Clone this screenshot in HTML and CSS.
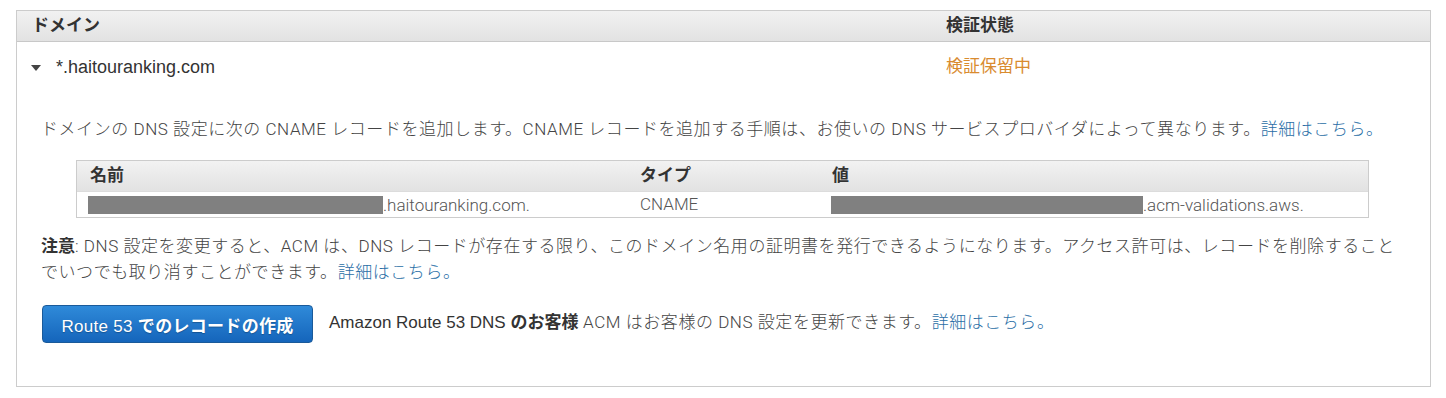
FILE: index.html
```html
<!DOCTYPE html>
<html lang="ja">
<head>
<meta charset="utf-8">
<link rel="stylesheet" href="styles.css">
</head>
<body>
<div class="panel">
  <div class="head">
    <div class="cell">ドメイン</div>
    <div class="cell">検証状態</div>
  </div>
  <div class="row">
    <div class="cell domain"><span class="caret"></span>*.haitouranking.com</div>
    <div class="cell status">検証保留中</div>
  </div>
  <div class="detail">
    <p class="lead">ドメインの DNS 設定に次の CNAME レコードを追加します。CNAME レコードを追加する手順は、お使いの DNS サービスプロバイダによって異なります。<a class="link">詳細はこちら。</a></p>
    <div class="records">
      <div class="rhead">
        <div class="c1">名前</div>
        <div class="c2">タイプ</div>
        <div class="c3">値</div>
      </div>
      <div class="rrow">
        <div class="c1 redact-cell"><span class="redact name-bar"></span>.haitouranking.com.</div>
        <div class="c2">CNAME</div>
        <div class="c3 redact-cell"><span class="redact value-bar"></span>.acm-validations.aws.</div>
      </div>
    </div>
    <p class="note"><b class="strong">注意</b>: DNS 設定を変更すると、ACM は、DNS レコードが存在する限り、このドメイン名用の証明書を発行できるようになります。アクセス許可は、レコードを削除することでいつでも取り消すことができます。<a class="link">詳細はこちら。</a></p>
    <div class="actions">
      <button class="btn"><span class="lat">Route 53 </span><span class="cjk">でのレコードの作成</span></button>
      <p class="hint"><span class="lat-dark">Amazon Route 53 DNS </span><b class="strong">のお客様</b> ACM はお客様の DNS 設定を更新できます。<a class="link">詳細はこちら。</a></p>
    </div>
  </div>
</div>
</body>
</html>
```

FILE: styles.css
```css
* { box-sizing: border-box; }
html, body { margin: 0; background: #fff; }
body {
  padding: 10px 15px 0 16px;
  font-family: "Liberation Sans", Arial, "Noto Sans CJK JP", sans-serif;
  font-size: 17px;
  color: #444;
}
.panel {
  width: 1415px;
  border: 1px solid #ccc;
  padding-bottom: 43px;
}
.head, .row {
  display: grid;
  grid-template-columns: 914px 1fr;
}
.head {
  height: 31px;
  background: linear-gradient(#f1f1f1, #e2e2e2);
  border-bottom: 1px solid #c8c8c8;
  font-weight: bold;
  color: #333;
  line-height: 30px;
}
.cell { padding-left: 15px; }
.row {
  padding-top: 13px;
  line-height: 24px;
  height: 50px;
}
.domain {
  display: flex;
  align-items: center;
  align-self: start;
  height: 24px;
  color: #333;
  font-size: 18px;
  padding-left: 14px;
}
.caret {
  width: 0;
  height: 0;
  border-left: 5px solid transparent;
  border-right: 5px solid transparent;
  border-top: 6px solid #444;
  margin-right: 15px;
  margin-top: 1px;
}
.status { color: #d98b2f; }
.detail {
  padding: 24px 24px 0 24px;
}
p { margin: 0; }
.lead, .note, .hint {
  font-family: "Roboto", "Noto Sans CJK JP", sans-serif;
  font-weight: 300;
  line-height: 26px;
  color: #444;
  letter-spacing: 0.55px;
}
.link { color: #2a6ea6; }
.records {
  margin: 18px 37px 15px 35px;
  border: 1px solid #ccc;
}
.rhead, .rrow {
  display: grid;
  grid-template-columns: 550px 192px 1fr;
}
.rhead {
  height: 31px;
  line-height: 30px;
  background: linear-gradient(#f2f2f2, #e2e2e2);
  border-bottom: 1px solid #dcdcdc;
  font-weight: bold;
  color: #333;
}
.rhead > div { padding-left: 13px; }
.rrow {
  height: 25px;
  line-height: 24px;
  font-family: "Roboto", "Noto Sans CJK JP", sans-serif;
  font-weight: 300;
  color: #555;
}
.rrow > div { padding-left: 13px; }
.rrow > .redact-cell { padding-left: 11px; display: flex; align-items: center; }
.rrow > .c3.redact-cell { padding-left: 12px; }
.redact {
  display: inline-block;
  height: 18px;
  background: #808080;
}
.name-bar { width: 295px; }
.value-bar { width: 312px; }
.strong { font-weight: bold; color: #333; letter-spacing: 0; }
.actions {
  display: flex;
  align-items: center;
  margin-top: 20px;
  margin-left: 1px;
}
.btn {
  width: 271px;
  height: 38px;
  border: 1px solid #1a5a9a;
  border-radius: 4px;
  background: linear-gradient(#2f8ad9, #1565bb);
  color: #fff;
  font-family: "Liberation Sans", Arial, "Noto Sans CJK JP", sans-serif;
  font-size: 17px;
  padding: 0;
  letter-spacing: 0.3px;
  text-shadow: 0 1px 1px rgba(0,0,0,0.25);
}
.btn .cjk { font-weight: bold; }
.hint { margin-left: 16px; margin-top: -3px; }
.lat-dark {
  font-family: "Liberation Sans", Arial, sans-serif;
  font-weight: 400;
  color: #333;
  letter-spacing: 0;
}
```
